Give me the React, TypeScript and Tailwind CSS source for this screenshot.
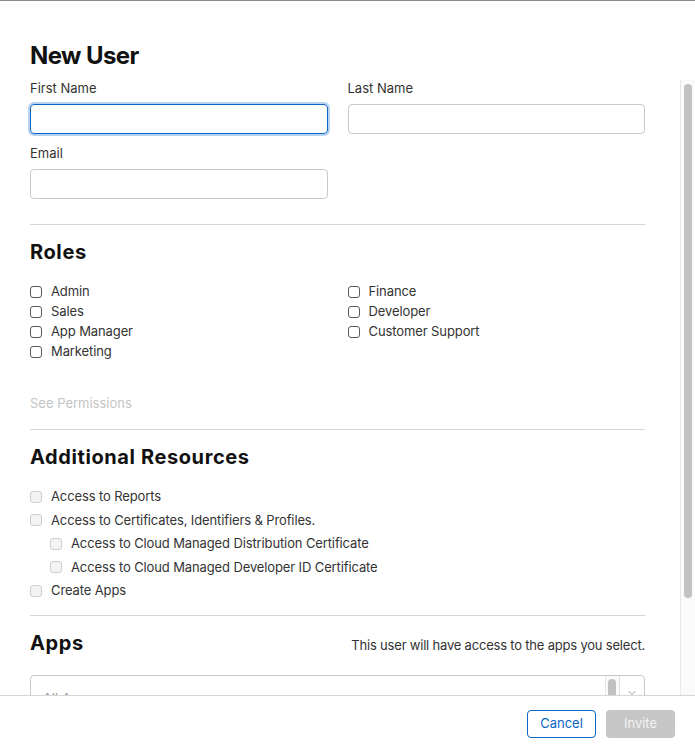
import { ChevronDown } from 'lucide-react';

const font = { fontFamily: 'Inter, "Noto Sans", sans-serif' };

function Box({ disabled }: { disabled?: boolean }) {
  return (
    <span
      className={
        disabled
          ? 'w-[12px] h-[12px] rounded-[3px] border border-[#cfcfcf] bg-[#f3f3f3] shrink-0'
          : 'w-[12px] h-[12px] rounded-[3px] border border-[#5a5a5a] bg-white shrink-0'
      }
    />
  );
}

function RoleRow({ label }: { label: string }) {
  return (
    <div className="h-5 flex items-center">
      <Box />
      <span className="ml-[9px] text-[13px] text-[#333] tracking-[-0.1px]">{label}</span>
    </div>
  );
}

function ResourceRow({ label, nested }: { label: string; nested?: boolean }) {
  return (
    <div className={nested ? 'h-[23.5px] flex items-center pl-5' : 'h-[23.5px] flex items-center'}>
      <Box disabled />
      <span className="ml-[9px] text-[13px] text-[#333] tracking-[-0.12px]">{label}</span>
    </div>
  );
}

function Field({ label, focused }: { label: string; focused?: boolean }) {
  return (
    <div className="flex flex-col">
      <label className="text-[13px] leading-4 text-[#333] mb-2">{label}</label>
      <input
        className={
          focused
            ? 'h-[30px] w-full rounded-[4px] border border-[#0b66c3] ring-2 ring-[#b5d3f1] outline-none px-2 text-[13px]'
            : 'h-[30px] w-full rounded-[4px] border border-[#c9c9c9] outline-none px-2 text-[13px]'
        }
      />
    </div>
  );
}

export default function App() {
  return (
    <div className="w-[695px] h-[752px] bg-white border-t border-[#8c8c8c] flex flex-col overflow-hidden" style={font}>
      {/* Header */}
      <div className="h-[79px] pl-[30px] pt-[40px] shrink-0">
        <h1 className="text-[24px] leading-[29px] font-bold text-[#111] tracking-[-0.6px]">New User</h1>
      </div>

      {/* Scroll body */}
      <div className="flex-1 flex min-h-0">
        <div className="flex-1 overflow-hidden pl-[30px] pr-[35px]">
          <div className="grid grid-cols-2 gap-x-5">
            <Field label="First Name" focused />
            <Field label="Last Name" />
          </div>
          <div className="grid grid-cols-2 gap-x-5 mt-[11px]">
            <Field label="Email" />
          </div>

          <div className="mt-[25px] h-px bg-[#d6d6d6]" />

          <h2 className="mt-[15px] text-[20px] leading-6 font-bold text-[#111] tracking-[0.6px]">Roles</h2>
          <div className="mt-[18px] grid grid-cols-2 gap-x-5">
            <div>
              <RoleRow label="Admin" />
              <RoleRow label="Sales" />
              <RoleRow label="App Manager" />
              <RoleRow label="Marketing" />
            </div>
            <div>
              <RoleRow label="Finance" />
              <RoleRow label="Developer" />
              <RoleRow label="Customer Support" />
            </div>
          </div>
          <div className="mt-[33px] text-[13px] leading-4 text-[#c4c4c4]">See Permissions</div>

          <div className="mt-[18px] h-px bg-[#d6d6d6]" />

          <h2 className="mt-[15px] text-[20px] leading-6 font-bold text-[#111] tracking-[0.6px]">Additional Resources</h2>
          <div className="mt-[16px]">
            <ResourceRow label="Access to Reports" />
            <ResourceRow label="Access to Certificates, Identifiers & Profiles." />
            <ResourceRow label="Access to Cloud Managed Distribution Certificate" nested />
            <ResourceRow label="Access to Cloud Managed Developer ID Certificate" nested />
            <ResourceRow label="Create Apps" />
          </div>

          <div className="mt-[12px] h-px bg-[#d6d6d6]" />

          <div className="mt-[15px] flex items-baseline justify-between">
            <h2 className="text-[20px] leading-6 font-bold text-[#111] tracking-[0.6px]">Apps</h2>
            <span className="text-[13px] text-[#333] tracking-[-0.2px]">
              This user will have access to the apps you select.
            </span>
          </div>

          <div className="mt-5 h-[44px] rounded-[4px] border border-[#c9c9c9] flex">
            <div className="flex-1 flex items-start pl-3 pt-[13px] text-[13px] text-[#999]">All Apps</div>
            <div className="w-[14px] border-l border-[#e6e6e6] bg-[#fafafa] pt-[3px] pl-[2px]">
              <div className="w-[8px] h-[60px] rounded-full bg-[#c1c1c1]" />
            </div>
            <div className="w-[25px] border-l border-[#e0e0e0] flex items-start justify-center pt-[11px]">
              <ChevronDown size={12} strokeWidth={1.5} color="#777" />
            </div>
          </div>
        </div>

        {/* Scrollbar */}
        <div className="w-[15px] shrink-0 border-l border-[#e8e8e8] bg-[#fafafa] pt-[4px] pl-[3px]">
          <div className="w-[8px] h-[514px] rounded-full bg-[#c2c2c2]" />
        </div>
      </div>

      {/* Footer */}
      <div className="h-[57px] shrink-0 border-t border-[#d6d6d6] flex items-center justify-end gap-[10px] pr-5 pb-px">
        <button className="w-[69px] h-[28px] rounded-[4px] border border-[#0b66c3] text-[#0b66c3] text-[13px] bg-white">
          Cancel
        </button>
        <button className="w-[69px] h-[28px] rounded-[4px] bg-[#c6c6c6] text-[#f2f2f2] text-[13px]">
          Invite
        </button>
      </div>
    </div>
  );
}
